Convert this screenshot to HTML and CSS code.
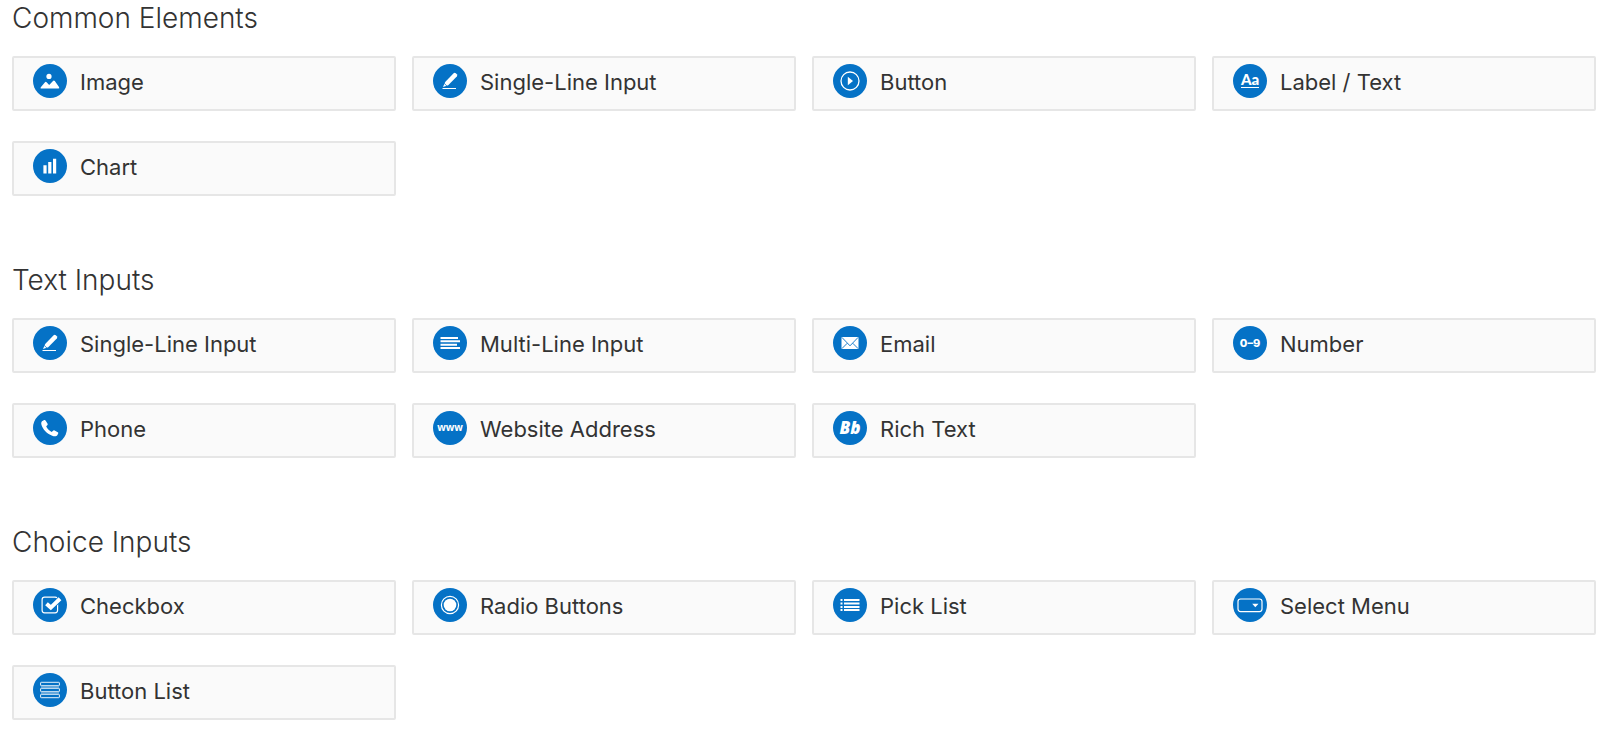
FILE: index.html
```html
<!DOCTYPE html>
<html lang="en">
<head>
<meta charset="utf-8">
<title>Form Elements</title>
<link rel="stylesheet" href="styles.css">
</head>
<body>
<svg class="sprite" aria-hidden="true">
  <symbol id="pencil" viewBox="0 0 34 34">
    <path fill="#fff" d="M12.2 18.1 20.6 9.3Q21.7 8.4 22.8 9.3L23.8 10.3Q24.7 11.4 23.8 12.5L15.2 21.2 10 22.9Z"/>
    <path stroke="#fff" d="M9.5 24.5H23"/>
    <path stroke="#0572c6" stroke-width=".8" d="M11.2 19.3 14 22.2"/>
  </symbol>
</svg>
<main class="palette">
  <section class="group">
    <h2 class="group-title">Common Elements</h2>
    <div class="cards">
      <button class="card" type="button">
        <svg class="icon" viewBox="0 0 34 34" aria-hidden="true"><circle cx="16" cy="12.4" r="2.6" fill="#fff"/><path fill="#fff" d="M8.6 24.4Q6.8 24.4 8 22.9L12 18.2Q12.8 17.4 13.6 18.2L16.2 20.9 20 17Q20.9 16.1 21.8 17L26 22.9Q26.9 24.4 25.3 24.4Z"/></svg>
        <span>Image</span>
      </button>
      <button class="card" type="button">
        <svg class="icon" aria-hidden="true"><use href="#pencil"/></svg>
        <span>Single-Line Input</span>
      </button>
      <button class="card" type="button">
        <svg class="icon" viewBox="0 0 34 34" aria-hidden="true"><circle cx="17" cy="17" r="9" fill="none" stroke="#fff" stroke-width="1.3"/><path fill="#fff" d="M14.8 12.7 20 17 14.8 21.3Z"/></svg>
        <span>Button</span>
      </button>
      <button class="card" type="button">
        <svg class="icon" viewBox="0 0 34 34" aria-hidden="true"><text class="glyph glyph-label" x="17" y="21">Aa</text><path stroke="#fff" d="M8 23.5H26"/></svg>
        <span>Label / Text</span>
      </button>
      <button class="card" type="button">
        <svg class="icon" viewBox="0 0 34 34" aria-hidden="true"><path fill="#fff" d="M10.4 16.3h3.2V24.5h-3.2zM15.2 13h3.2V24.5h-3.2zM20 9.7h3.2V24.5H20z"/></svg>
        <span>Chart</span>
      </button>
    </div>
  </section>

  <section class="group">
    <h2 class="group-title">Text Inputs</h2>
    <div class="cards">
      <button class="card" type="button">
        <svg class="icon" aria-hidden="true"><use href="#pencil"/></svg>
        <span>Single-Line Input</span>
      </button>
      <button class="card" type="button">
        <svg class="icon" viewBox="0 0 34 34" aria-hidden="true"><path fill="#fff" d="M7.5 11H25v2H7.5zM7.5 14.2H27v2H7.5zM7.5 17.8H24v2H7.5zM7.5 21H27v2H7.5z"/></svg>
        <span>Multi-Line Input</span>
      </button>
      <button class="card" type="button">
        <svg class="icon" viewBox="0 0 34 34" aria-hidden="true"><rect x="8.5" y="11" width="17" height="12" rx=".5" fill="#fff"/><path fill="none" stroke="#0572c6" stroke-width=".9" d="M8.8 11.3 17 19.8 25.2 11.3M8.8 22.7 14.3 17.2M25.2 22.7 19.7 17.2"/></svg>
        <span>Email</span>
      </button>
      <button class="card" type="button">
        <svg class="icon" viewBox="0 0 34 34" aria-hidden="true"><text class="glyph glyph-number" x="17" y="21">0–9</text></svg>
        <span>Number</span>
      </button>
      <button class="card" type="button">
        <svg class="icon" viewBox="0 0 34 34" aria-hidden="true"><path fill="#fff" d="M9 10.2 11.2 9.1Q12.1 8.8 12.7 9.7L14.6 12.7Q15 13.5 14.3 14.2L13.2 15.3C14.2 17.6 16 19.6 18.7 21L20.3 19.6Q20.9 19.2 21.6 19.5L24.8 21.2Q25.6 21.7 25.2 22.6L24.3 24.3C23.3 25.7 21.1 25.5 19.2 24.8 13.6 22.6 9.5 18 8.4 13.5 8.1 12.2 8.2 10.9 9 10.2Z"/></svg>
        <span>Phone</span>
      </button>
      <button class="card" type="button">
        <svg class="icon" viewBox="0 0 34 34" aria-hidden="true"><text class="glyph glyph-www" x="17" y="20">www</text></svg>
        <span>Website Address</span>
      </button>
      <button class="card" type="button">
        <svg class="icon" viewBox="0 0 34 34" aria-hidden="true"><text class="glyph glyph-rich" x="17" y="23">Bb</text></svg>
        <span>Rich Text</span>
      </button>
    </div>
  </section>

  <section class="group">
    <h2 class="group-title">Choice Inputs</h2>
    <div class="cards">
      <button class="card" type="button">
        <svg class="icon" viewBox="0 0 34 34" aria-hidden="true"><rect x="9.1" y="9.2" width="15.5" height="15.6" rx="2.5" fill="none" stroke="#fff" stroke-width="1.2"/><path fill="none" stroke="#0572c6" stroke-width="5.5" d="M14 16.2 17.8 19.8 27 10.8"/><path fill="none" stroke="#fff" stroke-width="4" d="M13.5 15.7 17.8 19.6 27 10.8"/></svg>
        <span>Checkbox</span>
      </button>
      <button class="card" type="button">
        <svg class="icon" viewBox="0 0 34 34" aria-hidden="true"><circle cx="17" cy="17" r="8.6" fill="none" stroke="#fff" stroke-width="1.2"/><circle cx="17" cy="17" r="6.3" fill="#fff"/></svg>
        <span>Radio Buttons</span>
      </button>
      <button class="card" type="button">
        <svg class="icon" viewBox="0 0 34 34" aria-hidden="true"><path fill="#fff" d="M7.5 11h2v2h-2zM11 11H26.5v2H11zM7.5 14.5h2v2h-2zM11 14.5H26.5v2H11zM7.5 18h2v2h-2zM11 18H26.5v2H11zM7.5 21h2v2h-2zM11 21H26.5v2H11z"/></svg>
        <span>Pick List</span>
      </button>
      <button class="card" type="button">
        <svg class="icon" viewBox="0 0 34 34" aria-hidden="true"><rect x="5" y="11" width="24" height="12.6" rx="2.5" fill="none" stroke="#fff" stroke-width="1.2"/><path fill="#fff" d="M19.2 15.8H25.5L22.3 19.2Z"/></svg>
        <span>Select Menu</span>
      </button>
      <button class="card" type="button">
        <svg class="icon" viewBox="0 0 34 34" aria-hidden="true"><g fill="none" stroke="#fff" stroke-width=".9"><rect x="7.6" y="9.3" width="18.8" height="3.4" rx=".7"/><rect x="7.6" y="15.3" width="18.8" height="3.4" rx=".7"/><rect x="7.6" y="21.3" width="18.8" height="3.4" rx=".7"/><path opacity=".6" d="M8 14H26M8 20H26"/></g></svg>
        <span>Button List</span>
      </button>
    </div>
  </section>
</main>
</body>
</html>
```
FILE: styles.css
```css
* {
  box-sizing: border-box;
}

body {
  margin: 0;
  background: #fff;
  color: #333;
  font-family: Inter, "Liberation Sans", sans-serif;
}

.sprite {
  position: absolute;
  width: 0;
  height: 0;
}

.palette {
  display: flex;
  flex-direction: column;
  gap: 66px;
  padding: 0 12px;
}

.group-title {
  margin: 0 0 20px;
  font-size: 28px;
  font-weight: 300;
  line-height: 36px;
}

.cards {
  display: grid;
  grid-template-columns: repeat(4, 1fr);
  gap: 30px 16px;
}

.card {
  display: flex;
  align-items: flex-start;
  gap: 13px;
  height: 55px;
  padding: 6px 19px;
  border: 2px solid #e6e6e6;
  border-radius: 2px;
  background: #fafafa;
  color: inherit;
  font-family: inherit;
  font-size: 22px;
  font-weight: 400;
  line-height: 36px;
  text-align: left;
}

.icon {
  flex: none;
  width: 34px;
  height: 34px;
  border-radius: 50%;
  background: #0572c6;
}

.glyph {
  fill: #fff;
  font-weight: 700;
  text-anchor: middle;
}

.glyph-label {
  font-family: Lato, sans-serif;
  font-size: 15px;
  font-weight: 900;
}

.glyph-number {
  font-family: Inter, sans-serif;
  font-size: 11px;
  font-weight: 800;
}

.glyph-www {
  font-family: "Open Sans", sans-serif;
  font-size: 10px;
}

.glyph-rich {
  font-family: "Open Sans", sans-serif;
  font-size: 17px;
  font-style: italic;
  font-weight: 800;
}
```
